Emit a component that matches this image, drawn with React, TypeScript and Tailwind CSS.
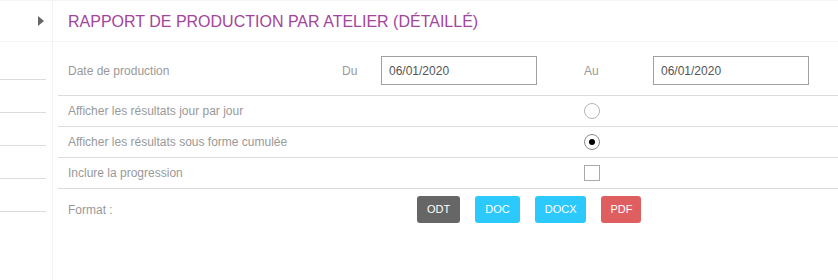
const rows = [
  { label: "Afficher les résultats jour par jour", kind: "radio", checked: false },
  { label: "Afficher les résultats sous forme cumulée", kind: "radio", checked: true },
  { label: "Inclure la progression", kind: "checkbox", checked: false },
];

const formats = [
  { label: "ODT", className: "bg-[#666666] px-[10px]" },
  { label: "DOC", className: "bg-[#2bc9fc] px-[10px]" },
  { label: "DOCX", className: "bg-[#2bc9fc] px-[10px]" },
  { label: "PDF", className: "bg-[#df5f60] px-[9px]" },
];

function Control({ kind, checked }: { kind: string; checked: boolean }) {
  if (kind === "checkbox") {
    return <span className="block h-4 w-4 border border-[#a9a9a9] bg-white" />;
  }
  return (
    <span
      className={`flex h-4 w-4 items-center justify-center rounded-full border bg-white ${
        checked ? "border-[#8a8a8a]" : "border-[#b5b5b5]"
      }`}
    >
      {checked && <span className="block h-[6px] w-[6px] rounded-full bg-black" />}
    </span>
  );
}

export default function App() {
  return (
    <div className="flex h-[280px] w-[838px] border-t border-[#f4f4f4] bg-white font-['Liberation_Sans',Arial,sans-serif] text-xs">
      {/* Sidebar */}
      <aside className="flex w-[53px] shrink-0 flex-col border-r border-[#f2f2f2]">
        <div className="flex h-[41px] items-center justify-end border-b border-[#f4f4f4] pr-[8px]">
          <svg width="6" height="10" viewBox="0 0 6 10">
            <polygon points="0,0 6,5 0,10" fill="#666" />
          </svg>
        </div>
        <div className="mr-[6px]">
          <div className="h-[38px] border-b border-[#dcdcdc]" />
          <div className="h-[33px] border-b border-[#dcdcdc]" />
          <div className="h-[33px] border-b border-[#dcdcdc]" />
          <div className="h-[33px] border-b border-[#dcdcdc]" />
          <div className="h-[33px] border-b border-[#dcdcdc]" />
        </div>
      </aside>

      {/* Main */}
      <main className="flex min-w-0 flex-1 flex-col">
        <header className="flex h-[41px] items-center border-b border-[#f4f4f4] pl-[15px] pt-[1px]">
          <h1 className="text-[16px] leading-none text-[#a3449d]">
            RAPPORT DE PRODUCTION PAR ATELIER (DÉTAILLÉ)
          </h1>
        </header>

        <div className="ml-[5px] flex flex-col">
          <div className="flex items-center border-b border-[#dcdcdc] pb-[10px] pt-[14px]">
            <span className="w-[284px] pl-[10px] text-[#999]">Date de production</span>
            <span className="w-[39px] text-[#999]">Du</span>
            <div className="flex h-[29px] w-[156px] items-center border border-[#a0a0a0] px-[7px] text-[#555]">
              06/01/2020
            </div>
            <span className="ml-[47px] w-[69px] text-[#999]">Au</span>
            <div className="flex h-[29px] w-[156px] items-center border border-[#a0a0a0] px-[7px] text-[#555]">
              06/01/2020
            </div>
          </div>

          {rows.map((row) => (
            <div key={row.label} className="flex h-[31px] items-center border-b border-[#dcdcdc]">
              <span className="w-[526px] pl-[10px] text-[#999]">{row.label}</span>
              <Control kind={row.kind} checked={row.checked} />
            </div>
          ))}

          <div className="flex items-start pt-[7px]">
            <span className="flex h-[27px] w-[359px] items-center pl-[10px] text-[#999]">Format :</span>
            <div className="flex gap-[15px]">
              {formats.map((f) => (
                <button
                  key={f.label}
                  type="button"
                  className={`flex h-[27px] items-center rounded-[3px] text-[11px] text-white ${f.className}`}
                >
                  {f.label}
                </button>
              ))}
            </div>
          </div>
        </div>
      </main>
    </div>
  );
}
